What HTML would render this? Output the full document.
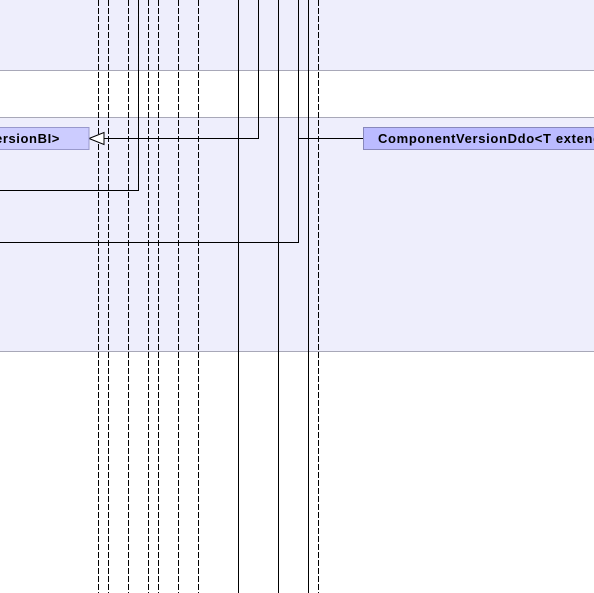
<html><body style="margin:0;width:594px;height:593px;overflow:hidden;background:#fff;font-family:'Liberation Sans',sans-serif">
<svg width="594" height="593" style="position:absolute;left:0;top:0">
<rect x="0" y="0" width="594" height="70" fill="#eeeefc"/>
<line x1="0" y1="70.5" x2="594" y2="70.5" stroke="#a8a8b8"/>
<rect x="0" y="118" width="594" height="233" fill="#eeeefc"/>
<line x1="0" y1="117.5" x2="594" y2="117.5" stroke="#a8a8b8"/>
<line x1="0" y1="351.5" x2="594" y2="351.5" stroke="#a8a8b8"/>
<g stroke="#000" stroke-width="1" fill="none">
<g stroke-dasharray="6,2">
<line x1="98.5" y1="0" x2="98.5" y2="593"/>
<line x1="108.5" y1="0" x2="108.5" y2="593"/>
<line x1="128.5" y1="0" x2="128.5" y2="593"/>
<line x1="148.5" y1="0" x2="148.5" y2="593"/>
<line x1="158.5" y1="0" x2="158.5" y2="593"/>
<line x1="178.5" y1="0" x2="178.5" y2="593"/>
<line x1="198.5" y1="0" x2="198.5" y2="593"/>
<line x1="318.5" y1="0" x2="318.5" y2="593"/>
</g>
<line x1="238.5" y1="0" x2="238.5" y2="593"/>
<line x1="278.5" y1="0" x2="278.5" y2="593"/>
<line x1="308.5" y1="0" x2="308.5" y2="593"/>
<polyline points="138.5,0 138.5,190.5 0,190.5"/>
<polyline points="298.5,0 298.5,242.5 0,242.5"/>
<polyline points="258.5,0 258.5,138.5 104,138.5"/>
<line x1="298" y1="138.5" x2="363" y2="138.5"/>
<polygon points="89,138.5 104,132.5 104,144.5" fill="#fff"/>
</g>
<rect x="-10" y="127.5" width="99" height="22" fill="#ccccff" stroke="#9999cc"/>
<rect x="363.5" y="127.5" width="240" height="22" fill="#bbbbff" stroke="#8888bb"/>
<text x="60" y="143" font-size="13" font-weight="bold" text-anchor="end" letter-spacing="0.6" font-family="Liberation Sans,sans-serif">ersionBI&gt;</text>
<text x="378" y="143" font-size="13" font-weight="bold" letter-spacing="0.65" font-family="Liberation Sans,sans-serif">ComponentVersionDdo&lt;T extends</text>
</svg>
</body></html>
